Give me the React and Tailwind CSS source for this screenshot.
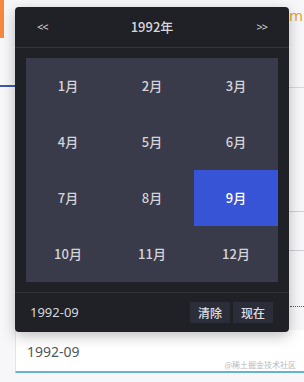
export default function App() {
  const months = ["1月","2月","3月","4月","5月","6月","7月","8月","9月","10月","11月","12月"];
  return (
    <div className="relative w-[304px] h-[382px] overflow-hidden bg-[#f7f7f9]" style={{ fontFamily: '"Noto Sans", "Noto Sans CJK SC", sans-serif' }}>
      {/* background page bits */}
      <div className="absolute left-0 top-0 w-[4px] h-[38px] bg-[#f5883a]" />
      <div className="absolute left-0 top-[85px] w-[16px] h-[2px] bg-[#3b5bb0]" />
      <div className="absolute left-[289px] top-[6px] text-[15px] text-[#e8a33c] leading-[18px]">m</div>
      <div className="absolute left-[289px] top-[87px] w-[15px] h-px bg-[#d8d8dc]" />
      <div className="absolute left-[289px] top-[211px] w-[15px] h-px bg-[#d0d0d4]" />
      <div className="absolute left-[289px] top-[250px] w-[15px] h-px bg-[#d0d0d4]" />
      <div className="absolute left-[290px] top-[306px] w-[14px] border-t border-dotted border-[#555]" />

      {/* input */}
      <div className="absolute left-[15px] top-[330px] right-0 h-[43px] bg-white border-l border-[#e4e4e8] border-b-2 border-b-[#62b3d6]">
        <div className="pl-[11px] pt-[12px] text-[14px] text-[#555] leading-[20px]">1992-09</div>
        <div className="absolute right-[8px] bottom-[2px] text-[8px] text-[#b8b8be] leading-none" style={{ fontFamily: '"Noto Sans CJK SC", sans-serif' }}>@稀土掘金技术社区</div>
      </div>

      {/* popover */}
      <div className="absolute left-[15px] top-[7px] w-[274px] h-[325px] bg-[#202127] rounded-[4px] shadow-[0_4px_14px_rgba(0,0,0,0.25)] flex flex-col">
        <div className="h-[41px] flex items-center justify-between px-[22px] text-[#d6d6dc] border-b border-[#34353c]">
          <span className="text-[11px] tracking-[-1px]">&lt;&lt;</span>
          <span className="text-[13px] font-medium" style={{ fontFamily: '"Noto Sans CJK SC", sans-serif' }}>1992年</span>
          <span className="text-[11px] tracking-[-1px]">&gt;&gt;</span>
        </div>
        <div className="mx-[11px] mt-[10px] w-[252px] h-[224px] bg-[#3a3b4a] grid grid-cols-3 grid-rows-4" style={{ fontFamily: '"Noto Sans CJK SC", sans-serif' }}>
          {months.map((m) => (
            <div key={m} className={"flex items-center justify-center text-[13px] font-medium " + (m === "9月" ? "bg-[#3753d6] text-white" : "text-[#d4d4da]")}>
              {m}
            </div>
          ))}
        </div>
        <div className="mt-[10px] border-t border-[#33343b] flex-1 flex items-center justify-between pl-[15px] pr-[16px]">
          <span className="text-[13px] text-[#d6d6dc] pt-[1px]">1992-09</span>
          <div className="flex gap-[3px] font-medium" style={{ fontFamily: '"Noto Sans CJK SC", sans-serif' }}>
            <span className="w-[40px] h-[21px] flex items-center justify-center bg-[#2b2e39] text-[12px] text-[#e0e0e6]">清除</span>
            <span className="w-[40px] h-[21px] flex items-center justify-center bg-[#2b2e39] text-[12px] text-[#e0e0e6]">现在</span>
          </div>
        </div>
      </div>
    </div>
  );
}
